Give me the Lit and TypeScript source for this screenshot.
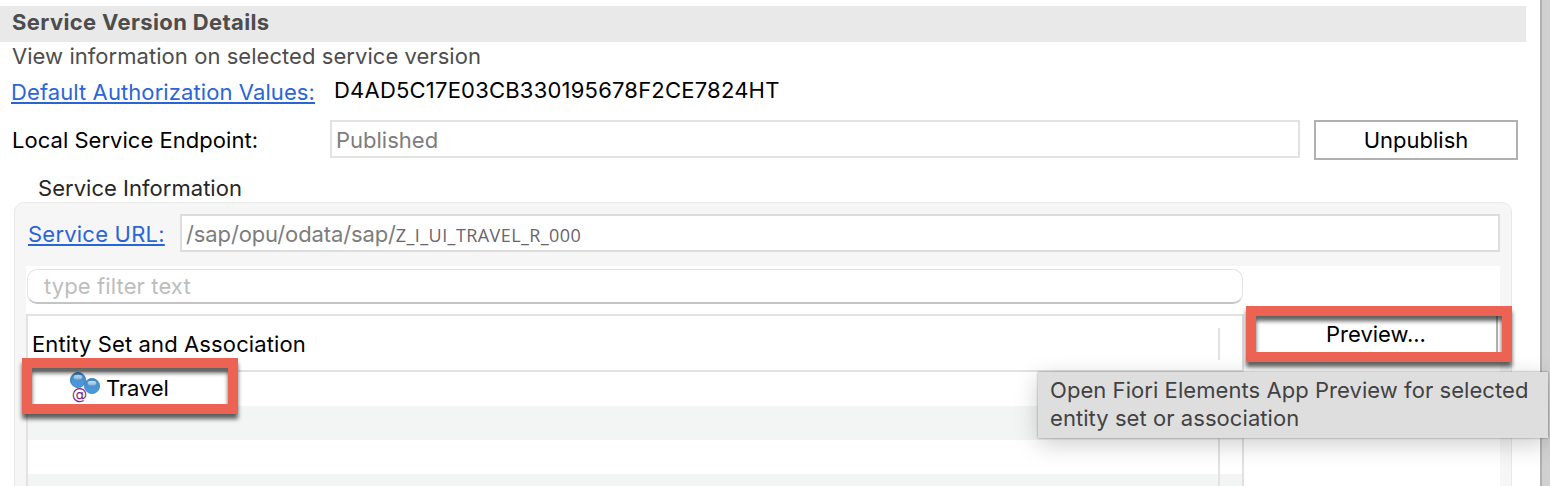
import { LitElement, html, css, svg } from "lit";
import { customElement } from "lit/decorators.js";

const rows = ["Travel", "", "", ""];

const entityIcon = svg`
  <defs>
    <linearGradient id="ball" x1="0" y1="0" x2="0" y2="1">
      <stop offset="0" stop-color="#3b82bf" />
      <stop offset="0.5" stop-color="#4d93cf" />
      <stop offset="1" stop-color="#4a9be0" />
    </linearGradient>
    <linearGradient id="gloss" x1="0" y1="0" x2="0" y2="1">
      <stop offset="0" stop-color="#cfe3f3" />
      <stop offset="1" stop-color="#7fb2dd" />
    </linearGradient>
  </defs>
  <circle cx="8" cy="8" r="7.6" fill="url(#ball)" stroke="#2f74b5" stroke-width="0.8" />
  <ellipse cx="8" cy="5.2" rx="4.3" ry="2.4" fill="url(#gloss)" />
  <circle cx="22" cy="14" r="7.6" fill="url(#ball)" stroke="#3a80c4" stroke-width="0.8" />
  <ellipse cx="22" cy="11.2" rx="4.3" ry="2.4" fill="url(#gloss)" />
  <circle cx="9.5" cy="23" r="7.2" fill="#fff" />
  <text class="at" x="9.5" y="27" text-anchor="middle">@</text>
`;

@customElement("app-root")
export class AppRoot extends LitElement {
  static styles = css`
    :host {
      display: block;
      width: 1550px;
      height: 486px;
      overflow: hidden;
      position: relative;
      background: #fff;
      color: #000;
      font: 22px/28px Inter, "Liberation Sans", sans-serif;
    }
    * { box-sizing: border-box; }
    .shell { display: flex; height: 486px; white-space: nowrap; }
    .page { width: 1540px; }
    .edge { width: 10px; background: #d1d1d1; border-left: 2px solid #b0b0b0; }
    .title {
      margin-top: 6px; height: 36px; width: 1526px; padding: 2px 12px;
      background: #e9e9e9; color: #4d4d4d; font-weight: 700; letter-spacing: 0.36px;
    }
    .subtitle { padding-left: 12px; color: #4d4d4d; letter-spacing: 0.05px; }
    .auth { display: flex; height: 50px; padding-left: 11px; align-items: flex-start; }
    .link {
      color: #2a65d8; text-decoration: underline;
      text-decoration-thickness: 2px; text-underline-offset: 2px;
    }
    .auth .link { width: 323px; padding-top: 8px; letter-spacing: 0.09px; }
    .key { padding-top: 6px; letter-spacing: 0.21px; }
    .endpoint { display: flex; padding-left: 12px; height: 40px; }
    .endpoint .label { width: 318px; padding-top: 6px; letter-spacing: 0.03px; }
    .field { border: 2px solid #e2e2e2; background: #fff; color: #7d7d7d; height: 38px; padding: 4px; }
    .endpoint .field { width: 970px; }
    .button { border: 2px solid #b0b0b0; background: #fff; text-align: center; }
    .unpublish { width: 204px; height: 40px; margin-left: 14px; padding: 4px 0; }
    .group-title { padding: 14px 0 0 38px; height: 42px; color: #262626; letter-spacing: 0.03px; }
    .group {
      margin-left: 14px; width: 1498px; height: 300px; padding: 11px 11px 0;
      border: 1px solid #e8e8e8; border-radius: 10px; background: #f6f6f6;
    }
    .url { display: flex; height: 52px; padding-left: 2px; }
    .url .link { width: 152px; padding-top: 6px; letter-spacing: 0.22px; }
    .url .field { width: 1320px; display: flex; border-color: #dcdcdc; }
    .path { letter-spacing: -0.12px; }
    .service {
      font-size: 18px; color: #6b646e; font-family: "Open Sans", sans-serif;
      letter-spacing: 0.42px; padding-top: 1px;
    }
    .content { display: flex; width: 1474px; height: 240px; background: #fff; }
    .left { width: 1218px; padding-top: 3px; }
    .filter {
      width: 1216px; height: 35px; margin-left: 1px; padding: 2px 16px; letter-spacing: 0.12px;
      border: 1px solid #e4e4e4; border-bottom: 2px solid #c4c4c4; border-radius: 10px; color: #bdbdbd;
    }
    .table { margin-top: 10px; border: 2px solid #e2e2e2; height: 200px; }
    .thead { display: flex; height: 56px; border-bottom: 2px solid #e2e2e2; padding: 12px 0 0 4px; }
    .thead .name { width: 1186px; padding-top: 2px; letter-spacing: 0.12px; }
    .divider { height: 32px; border-left: 2px solid #e2e2e2; }
    .row { display: flex; height: 34px; }
    .row:nth-child(odd) { background: #f3f5f5; }
    .cell { display: flex; width: 1192px; border-right: 2px solid #e2e2e2; padding: 0 0 0 42px; }
    .icon { width: 31px; height: 31px; }
    .at { font: 15.5px "DejaVu Sans", sans-serif; fill: #7b1f82; }
    .cell .text { padding: 2px 0 0 5px; letter-spacing: -0.12px; }
    .right { padding: 48px 0 0 10px; }
    .preview { width: 244px; height: 40px; padding: 4px 0; }
    .callout {
      position: absolute; border: 10px solid #ec6353;
      filter: drop-shadow(0 5px 2px rgba(0, 0, 0, 0.62));
    }
    .on-travel { left: 22px; top: 358px; width: 216px; height: 56px; }
    .on-preview { left: 1246px; top: 306px; width: 266px; height: 56px; }
    .tooltip {
      position: absolute; left: 1038px; top: 372px; width: 510px; height: 66px; padding: 4px 12px;
      background: #dedede; color: #424242; letter-spacing: 0.06px; white-space: nowrap;
      box-shadow: 0 0 2px rgba(0, 0, 0, 0.4), 0 6px 24px rgba(0, 0, 0, 0.2);
    }
  `;

  render() {
    return html`
      <div class="shell">
        <div class="page">
          <div class="title">Service Version Details</div>
          <div class="subtitle">View information on selected service version</div>
          <div class="auth">
            <div class="link">Default Authorization Values:</div>
            <div class="key">D4AD5C17E03CB330195678F2CE7824HT</div>
          </div>
          <div class="endpoint">
            <div class="label">Local Service Endpoint:</div>
            <div class="field">Published</div>
            <div class="button unpublish">Unpublish</div>
          </div>
          <div class="group-title">Service Information</div>
          <div class="group">
            <div class="url">
              <div class="link">Service URL:</div>
              <div class="field"><span class="path">/sap/opu/odata/sap/</span><span class="service">Z_I_UI_TRAVEL_R_000</span></div>
            </div>
            <div class="content">
              <div class="left">
                <div class="filter">type filter text</div>
                <div class="table">
                  <div class="thead">
                    <div class="name">Entity Set and Association</div>
                    <div class="divider"></div>
                  </div>
                  ${rows.map((name) => html`
                    <div class="row">
                      <div class="cell">
                        ${name ? html`<svg class="icon" viewBox="0 0 31 31">${entityIcon}</svg><span class="text">${name}</span>` : ""}
                      </div>
                    </div>`)}
                </div>
              </div>
              <div class="right"><div class="button preview">Preview...</div></div>
            </div>
          </div>
        </div>
        <div class="edge"></div>
      </div>
      <div class="callout on-travel"></div>
      <div class="tooltip">Open Fiori Elements App Preview for selected<br />entity set or association</div>
      <div class="callout on-preview"></div>
    `;
  }
}
